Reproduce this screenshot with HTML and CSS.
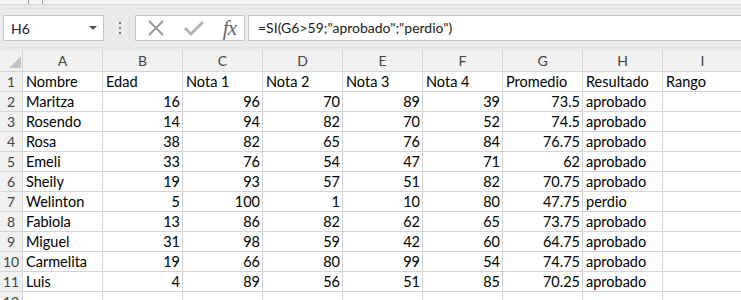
FILE: index.html
```html
<!DOCTYPE html>
<html lang="es">
<head>
    <meta charset="UTF-8">
    <meta name="viewport" content="width=device-width, initial-scale=1.0">
    <title>Notas</title>
    <link rel="stylesheet" href="styles.css">
</head>
<body>
    <div class="ribbon-edge">
        <span class="tick"></span>
        <span class="tick second"></span>
    </div>

    <div class="formula-bar">
        <div class="name-box">
            <span>H6</span>
            <span class="arrow"></span>
        </div>
        <div class="grip">
            <span></span><span></span><span></span>
        </div>
        <div class="actions">
            <svg class="icon" width="20" height="20" viewBox="0 0 20 20">
                <path d="M3 3 L17 17 M17 3 L3 17" stroke="#9a9a9a" stroke-width="2" fill="none"/>
            </svg>
            <svg class="icon" width="22" height="20" viewBox="0 0 22 20">
                <path d="M2 10 L8 16 L20 4" stroke="#b4b4b4" stroke-width="3" fill="none"/>
            </svg>
            <span class="fx">fx</span>
        </div>
        <div class="formula">=SI(G6&gt;59;"aprobado";"perdio")</div>
    </div>

    <div class="sheet">
        <div class="corner"><span class="corner-mark"></span></div>
        <div class="col-head">A</div>
        <div class="col-head">B</div>
        <div class="col-head">C</div>
        <div class="col-head">D</div>
        <div class="col-head">E</div>
        <div class="col-head">F</div>
        <div class="col-head">G</div>
        <div class="col-head">H</div>
        <div class="col-head">I</div>

        <div class="row-head">1</div>
        <div class="cell">Nombre</div>
        <div class="cell">Edad</div>
        <div class="cell">Nota 1</div>
        <div class="cell">Nota 2</div>
        <div class="cell">Nota 3</div>
        <div class="cell">Nota 4</div>
        <div class="cell">Promedio</div>
        <div class="cell">Resultado</div>
        <div class="cell">Rango</div>

        <div class="row-head">2</div>
        <div class="cell">Maritza</div>
        <div class="cell num">16</div>
        <div class="cell num">96</div>
        <div class="cell num">70</div>
        <div class="cell num">89</div>
        <div class="cell num">39</div>
        <div class="cell num">73.5</div>
        <div class="cell">aprobado</div>
        <div class="cell"></div>

        <div class="row-head">3</div>
        <div class="cell">Rosendo</div>
        <div class="cell num">14</div>
        <div class="cell num">94</div>
        <div class="cell num">82</div>
        <div class="cell num">70</div>
        <div class="cell num">52</div>
        <div class="cell num">74.5</div>
        <div class="cell">aprobado</div>
        <div class="cell"></div>

        <div class="row-head">4</div>
        <div class="cell">Rosa</div>
        <div class="cell num">38</div>
        <div class="cell num">82</div>
        <div class="cell num">65</div>
        <div class="cell num">76</div>
        <div class="cell num">84</div>
        <div class="cell num">76.75</div>
        <div class="cell">aprobado</div>
        <div class="cell"></div>

        <div class="row-head">5</div>
        <div class="cell">Emeli</div>
        <div class="cell num">33</div>
        <div class="cell num">76</div>
        <div class="cell num">54</div>
        <div class="cell num">47</div>
        <div class="cell num">71</div>
        <div class="cell num">62</div>
        <div class="cell">aprobado</div>
        <div class="cell"></div>

        <div class="row-head">6</div>
        <div class="cell">Sheily</div>
        <div class="cell num">19</div>
        <div class="cell num">93</div>
        <div class="cell num">57</div>
        <div class="cell num">51</div>
        <div class="cell num">82</div>
        <div class="cell num">70.75</div>
        <div class="cell">aprobado</div>
        <div class="cell"></div>

        <div class="row-head">7</div>
        <div class="cell">Welinton</div>
        <div class="cell num">5</div>
        <div class="cell num">100</div>
        <div class="cell num">1</div>
        <div class="cell num">10</div>
        <div class="cell num">80</div>
        <div class="cell num">47.75</div>
        <div class="cell">perdio</div>
        <div class="cell"></div>

        <div class="row-head">8</div>
        <div class="cell">Fabiola</div>
        <div class="cell num">13</div>
        <div class="cell num">86</div>
        <div class="cell num">82</div>
        <div class="cell num">62</div>
        <div class="cell num">65</div>
        <div class="cell num">73.75</div>
        <div class="cell">aprobado</div>
        <div class="cell"></div>

        <div class="row-head">9</div>
        <div class="cell">Miguel</div>
        <div class="cell num">31</div>
        <div class="cell num">98</div>
        <div class="cell num">59</div>
        <div class="cell num">42</div>
        <div class="cell num">60</div>
        <div class="cell num">64.75</div>
        <div class="cell">aprobado</div>
        <div class="cell"></div>

        <div class="row-head">10</div>
        <div class="cell">Carmelita</div>
        <div class="cell num">19</div>
        <div class="cell num">66</div>
        <div class="cell num">80</div>
        <div class="cell num">99</div>
        <div class="cell num">54</div>
        <div class="cell num">74.75</div>
        <div class="cell">aprobado</div>
        <div class="cell"></div>

        <div class="row-head">11</div>
        <div class="cell">Luis</div>
        <div class="cell num">4</div>
        <div class="cell num">89</div>
        <div class="cell num">56</div>
        <div class="cell num">51</div>
        <div class="cell num">85</div>
        <div class="cell num">70.25</div>
        <div class="cell">aprobado</div>
        <div class="cell"></div>

        <div class="row-head">12</div>
        <div class="cell"></div>
        <div class="cell"></div>
        <div class="cell"></div>
        <div class="cell"></div>
        <div class="cell"></div>
        <div class="cell"></div>
        <div class="cell"></div>
        <div class="cell"></div>
        <div class="cell"></div>
    </div>
</body>
</html>
```

FILE: styles.css
```css
body {
    margin: 0;
    width: 741px;
    height: 300px;
    overflow: hidden;
    background-color: #e9e9e9;
    font-family: Lato, "Liberation Sans", sans-serif;
}
.ribbon-edge {
    height: 4px;
    background: #f5f5f5;
    border-bottom: 1px solid #d8d8d8;
    position: relative;
}
.tick {
    position: absolute;
    left: 28px;
    top: 0;
    width: 1px;
    height: 4px;
    background: #a0a0a0;
}
.tick.second {
    left: 42px;
}
.formula-bar {
    display: flex;
    align-items: center;
    height: 46px;
    padding-left: 3px;
    box-sizing: border-box;
}
.name-box {
    display: flex;
    align-items: center;
    justify-content: space-between;
    width: 101px;
    height: 26px;
    box-sizing: border-box;
    padding: 0 6px 0 7px;
    background: white;
    border: 1px solid #c6c6c6;
    font-size: 14px;
    color: #222;
}
.arrow {
    width: 0;
    height: 0;
    border-left: 4px solid transparent;
    border-right: 4px solid transparent;
    border-top: 4px solid #555;
}
.grip {
    width: 31px;
    display: flex;
    flex-direction: column;
    align-items: center;
    gap: 3px;
}
.grip span {
    width: 2px;
    height: 2px;
    background: #777;
}
.actions {
    display: flex;
    align-items: center;
    justify-content: space-between;
    width: 110px;
    height: 26px;
    box-sizing: border-box;
    padding: 0 8px 0 10px;
    background: white;
    border: 1px solid #c6c6c6;
}
.fx {
    font-family: "Liberation Serif", serif;
    font-style: italic;
    font-size: 21px;
    color: #666;
    letter-spacing: -1px;
}
.formula {
    flex: 1;
    height: 26px;
    margin-left: 3px;
    box-sizing: border-box;
    padding-left: 9px;
    line-height: 24px;
    background: white;
    border: 1px solid #c6c6c6;
    border-right: none;
    font-size: 14px;
    color: #222;
    white-space: nowrap;
}
.sheet {
    display: grid;
    grid-template-columns: 22px repeat(9, 79px);
    grid-template-rows: 20px;
    grid-auto-rows: 19px;
    gap: 1px;
    background: #d4d4d4;
}
.corner,
.col-head,
.row-head {
    background: #f1f1f1;
    color: #444;
    font-size: 14px;
    text-align: center;
    line-height: 20px;
}
.row-head {
    line-height: 19px;
}
.corner {
    position: relative;
}
.corner-mark {
    position: absolute;
    right: 1px;
    bottom: 3px;
    width: 0;
    height: 0;
    border-left: 12px solid transparent;
    border-bottom: 12px solid #c6c6c6;
}
.cell {
    background: white;
    font-size: 14.5px;
    color: #000;
    line-height: 19px;
    padding: 0 3px;
    white-space: nowrap;
    overflow: hidden;
}
.num {
    text-align: right;
    padding-right: 2px;
}
```
